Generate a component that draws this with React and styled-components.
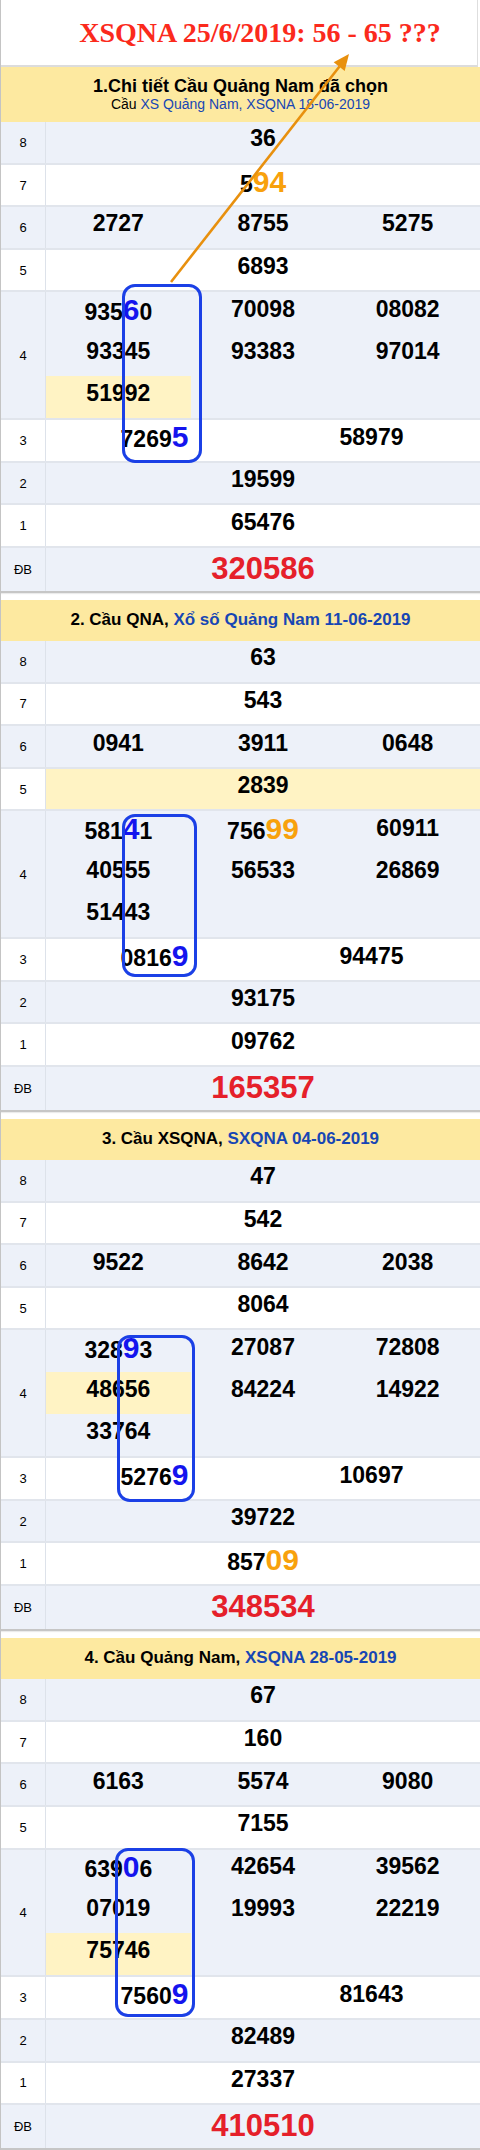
import React from 'react';
import styled, { createGlobalStyle } from 'styled-components';

const H = 42.6;

const GlobalStyle = createGlobalStyle`
  html, body {
    margin: 0;
    padding: 0;
    background: #fff;
  }
  body {
    font-family: 'Liberation Sans', Arial, sans-serif;
    color: #000;
  }
`;

const sections = [
  {
    title: '1.Chi tiết Cầu Quảng Nam đã chọn',
    sub: ['Cầu ', 'XS Quảng Nam, XSQNA 18-06-2019'],
    box: { left: 121, top: 162, width: 80, height: 179 },
    rows: [
      { label: '8', nums: ['36'] },
      { label: '7', nums: ['5{94}'] },
      { label: '6', nums: ['2727', '8755', '5275'] },
      { label: '5', nums: ['6893'] },
      { label: '4', grid: ['935[6]0', '70098', '08082', '93345', '93383', '97014', '51992'], mark: 6 },
      { label: '3', nums: ['7269[5]', '58979'] },
      { label: '2', nums: ['19599'] },
      { label: '1', nums: ['65476'] },
      { label: 'ĐB', nums: ['320586'] }
    ]
  },
  {
    title: '2. Cầu QNA, ',
    link: 'Xổ số Quảng Nam 11-06-2019',
    box: { left: 121, top: 173, width: 75, height: 163 },
    rows: [
      { label: '8', nums: ['63'] },
      { label: '7', nums: ['543'] },
      { label: '6', nums: ['0941', '3911', '0648'] },
      { label: '5', nums: ['2839'], yellow: true },
      { label: '4', grid: ['581[4]1', '756{99}', '60911', '40555', '56533', '26869', '51443'] },
      { label: '3', nums: ['0816[9]', '94475'] },
      { label: '2', nums: ['93175'] },
      { label: '1', nums: ['09762'] },
      { label: 'ĐB', nums: ['165357'] }
    ]
  },
  {
    title: '3. Cầu XSQNA, ',
    link: 'SXQNA 04-06-2019',
    box: { left: 116, top: 175, width: 78, height: 167 },
    rows: [
      { label: '8', nums: ['47'] },
      { label: '7', nums: ['542'] },
      { label: '6', nums: ['9522', '8642', '2038'] },
      { label: '5', nums: ['8064'] },
      { label: '4', grid: ['328[9]3', '27087', '72808', '48656', '84224', '14922', '33764'], mark: 3 },
      { label: '3', nums: ['5276[9]', '10697'] },
      { label: '2', nums: ['39722'] },
      { label: '1', nums: ['857{09}'] },
      { label: 'ĐB', nums: ['348534'] }
    ]
  },
  {
    title: '4. Cầu Quảng Nam, ',
    link: 'XSQNA 28-05-2019',
    box: { left: 114, top: 169, width: 80, height: 169 },
    rows: [
      { label: '8', nums: ['67'] },
      { label: '7', nums: ['160'] },
      { label: '6', nums: ['6163', '5574', '9080'] },
      { label: '5', nums: ['7155'] },
      { label: '4', grid: ['639[0]6', '42654', '39562', '07019', '19993', '22219', '75746'], mark: 6 },
      { label: '3', nums: ['7560[9]', '81643'] },
      { label: '2', nums: ['82489'] },
      { label: '1', nums: ['27337'] },
      { label: 'ĐB', nums: ['410510'] }
    ]
  }
];

// "[x]" = blue big digit, "{x}" = orange big digits
const Num = ({ value, special }) => {
  const parts = value.split(/(\[[^\]]+\]|\{[^}]+\})/).filter(Boolean);
  return (
    <Digits $special={special}>
      {parts.map((p, i) => {
        if (p.startsWith('[')) return <Blue key={i}>{p.slice(1, -1)}</Blue>;
        if (p.startsWith('{')) return <Orange key={i}>{p.slice(1, -1)}</Orange>;
        return <React.Fragment key={i}>{p}</React.Fragment>;
      })}
    </Digits>
  );
};

const Arrow = () => (
  <ArrowSvg viewBox="0 0 480 300" width="480" height="300">
    <line x1="170" y1="282" x2="338.5" y2="66.5" stroke="#e8900e" strokeWidth="2.6" />
    <polygon points="348,54 343.7,70.9 332.7,62.3" fill="#e8900e" />
  </ArrowSvg>
);

const Section = ({ data }) => {
  const { box } = data;
  return (
    <SectionWrap>
      <Header $tall={!!data.sub}>
        {data.sub ? (
          <>
            <HeadTitle>{data.title}</HeadTitle>
            <HeadSub>
              {data.sub[0]}
              <LinkText>{data.sub[1]}</LinkText>
            </HeadSub>
          </>
        ) : (
          <HeadTitle $big>
            {data.title}
            <LinkText>{data.link}</LinkText>
          </HeadTitle>
        )}
      </Header>
      <Body>
        <Bracket style={{ left: box.left, top: box.top, width: box.width, height: box.height }} />
        {data.rows.map((row, i) => (
          <Row key={row.label} $alt={i % 2 === 0} $span={row.grid ? 3 : 1}>
            <Label>{row.label}</Label>
            {row.grid ? (
              <Grid>
                {row.grid.map((n, j) => (
                  <GridCell key={j} $mark={row.mark === j}>
                    <Num value={n} />
                  </GridCell>
                ))}
              </Grid>
            ) : (
              <Data $cols={row.nums.length} $yellow={row.yellow}>
                {row.nums.map((n, j) => (
                  <Num key={j} value={n} special={row.label === 'ĐB'} />
                ))}
              </Data>
            )}
          </Row>
        ))}
      </Body>
    </SectionWrap>
  );
};

export default function App() {
  return (
    <>
      <GlobalStyle />
      <Page>
        <TitleBar>
          <Title>XSQNA 25/6/2019: 56 - 65 ???</Title>
        </TitleBar>
        {sections.map((s, i) => (
          <Section key={i} data={s} />
        ))}
        <Arrow />
      </Page>
    </>
  );
}

const Page = styled.div`
  position: relative;
  width: 480px;
  box-sizing: border-box;
  border-left: 1px solid #c4c4c4;
  overflow: hidden;
`;

const TitleBar = styled.div`
  height: 65px;
  display: flex;
  align-items: center;
  justify-content: center;
  padding-left: 42px;
  margin-right: 2px;
  border-right: 1px solid #dedede;
  border-bottom: 2px solid #dcdcdc;
`;

const Title = styled.h1`
  margin: 0;
  font-family: 'Liberation Serif', 'Times New Roman', serif;
  font-weight: bold;
  font-size: 28px;
  color: #fb2a1c;
  white-space: nowrap;
`;

const SectionWrap = styled.section`
  margin-bottom: 7px;
  &:last-of-type {
    margin-bottom: 0;
  }
`;

const Header = styled.div`
  height: ${(p) => (p.$tall ? 55 : 41.5)}px;
  background: #fde9a0;
  display: flex;
  flex-direction: column;
  align-items: center;
  justify-content: center;
  text-align: center;
`;

const HeadTitle = styled.div`
  font-weight: bold;
  font-size: ${(p) => (p.$big ? 17 : 18)}px;
  line-height: 20px;
  white-space: nowrap;
`;

const HeadSub = styled.div`
  font-size: 14px;
  line-height: 17px;
`;

const LinkText = styled.span`
  color: #1746b4;
`;

const Body = styled.div`
  position: relative;
  border-bottom: 2px solid #c6c6c6;
  box-shadow: 0 1px 1px rgba(0, 0, 0, 0.08);
`;

const Row = styled.div`
  display: grid;
  grid-template-columns: 45px 1fr;
  box-sizing: border-box;
  height: ${(p) => p.$span * H}px;
  background: ${(p) => (p.$alt ? '#edf1f9' : '#fff')};
  border-bottom: 2px solid #e1e5ec;
  &:last-child {
    border-bottom: none;
  }
`;

const Label = styled.div`
  display: flex;
  align-items: center;
  justify-content: center;
  font-size: 13px;
  border-right: 1px solid #dde2ea;
`;

const Data = styled.div`
  display: grid;
  grid-template-columns: repeat(${(p) => p.$cols}, 1fr);
  align-items: center;
  justify-items: center;
  background: ${(p) => (p.$yellow ? '#fff3c4' : 'transparent')};
`;

const Grid = styled.div`
  display: grid;
  grid-template-columns: repeat(3, 1fr);
  grid-template-rows: repeat(3, 1fr);
`;

const GridCell = styled.div`
  display: flex;
  align-items: center;
  justify-content: center;
  background: ${(p) => (p.$mark ? '#fff3c4' : 'transparent')};
`;

const Digits = styled.span`
  font-weight: bold;
  font-size: ${(p) => (p.$special ? 31 : 23)}px;
  color: ${(p) => (p.$special ? '#e5202a' : '#000')};
  padding-bottom: ${(p) => (p.$special ? 0 : 7)}px;
  white-space: nowrap;
`;

const Blue = styled.span`
  font-size: 30px;
  color: #1414ee;
`;

const Orange = styled.span`
  font-size: 30px;
  color: #f8a10c;
`;

const Bracket = styled.div`
  position: absolute;
  box-sizing: border-box;
  border: 3px solid #1b40e6;
  border-radius: 13px;
  pointer-events: none;
  z-index: 2;
`;

const ArrowSvg = styled.svg`
  position: absolute;
  top: 0;
  left: 0;
  pointer-events: none;
  z-index: 3;
`;
